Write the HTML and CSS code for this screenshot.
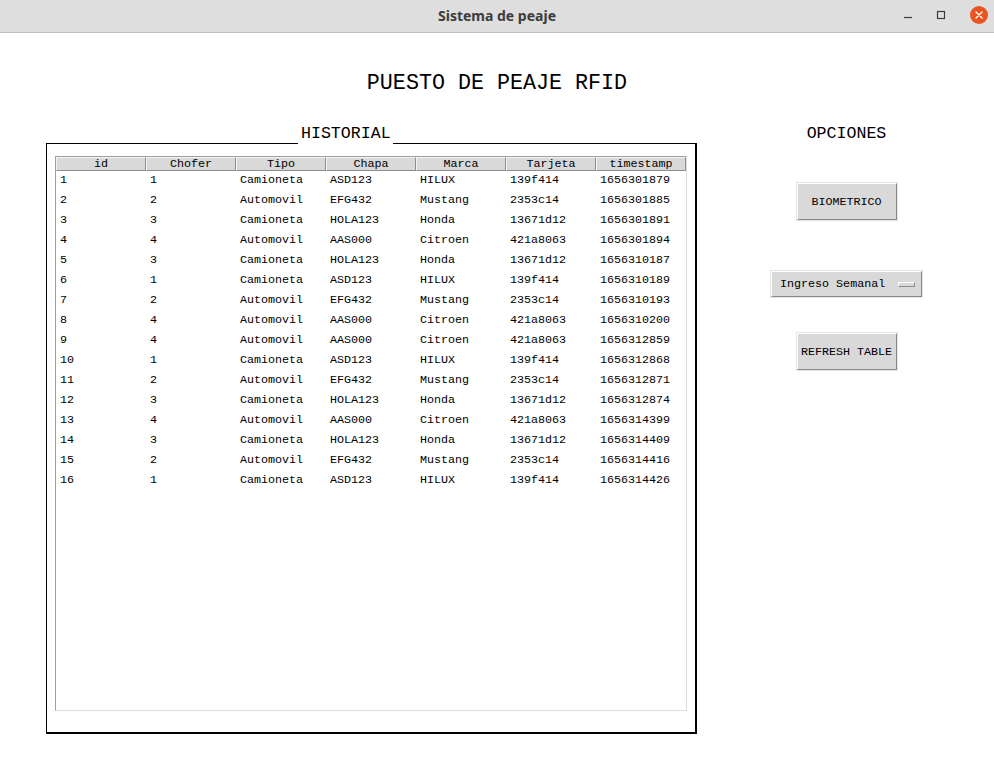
FILE: index.html
```html
<!DOCTYPE html>
<html lang="es">
<head>
<meta charset="utf-8">
<title>Sistema de peaje</title>
<link rel="stylesheet" href="styles.css">
</head>
<body>
<div class="window">
  <header class="titlebar">
    <div class="tb-spacer"></div>
    <div class="tb-title">Sistema de peaje</div>
    <div class="tb-controls">
      <span class="ctl ctl-min"><svg width="10" height="10" viewBox="0 0 10 10"><path d="M1 7.5h8" stroke="#3c3c3c" stroke-width="1.2"/></svg></span>
      <span class="ctl ctl-max"><svg width="10" height="10" viewBox="0 0 10 10"><rect x="1.5" y="1.5" width="7" height="7" fill="none" stroke="#3c3c3c" stroke-width="1.2"/></svg></span>
      <span class="ctl ctl-close"><svg width="18" height="18" viewBox="0 0 18 18"><circle cx="9" cy="9" r="9" fill="#e95420"/><path d="M6 6l6 6M12 6l-6 6" stroke="#fff" stroke-width="1.4" stroke-linecap="round"/></svg></span>
    </div>
  </header>

  <main class="content">
    <h1 class="app-title">PUESTO DE PEAJE RFID</h1>

    <div class="main-row">
      <section class="historial">
        <div class="legend-row">
          <span class="legend-line legend-line-left"></span>
          <span class="legend-label">HISTORIAL</span>
          <span class="legend-line legend-line-right"></span>
        </div>
        <div class="frame">
          <div class="tree">
            <div class="tree-head">
              <div class="th">id</div>
              <div class="th">Chofer</div>
              <div class="th">Tipo</div>
              <div class="th">Chapa</div>
              <div class="th">Marca</div>
              <div class="th">Tarjeta</div>
              <div class="th">timestamp</div>
            </div>
            <div class="tree-body">
              <div class="tr"><span>1</span><span>1</span><span>Camioneta</span><span>ASD123</span><span>HILUX</span><span>139f414</span><span>1656301879</span></div>
              <div class="tr"><span>2</span><span>2</span><span>Automovil</span><span>EFG432</span><span>Mustang</span><span>2353c14</span><span>1656301885</span></div>
              <div class="tr"><span>3</span><span>3</span><span>Camioneta</span><span>HOLA123</span><span>Honda</span><span>13671d12</span><span>1656301891</span></div>
              <div class="tr"><span>4</span><span>4</span><span>Automovil</span><span>AAS000</span><span>Citroen</span><span>421a8063</span><span>1656301894</span></div>
              <div class="tr"><span>5</span><span>3</span><span>Camioneta</span><span>HOLA123</span><span>Honda</span><span>13671d12</span><span>1656310187</span></div>
              <div class="tr"><span>6</span><span>1</span><span>Camioneta</span><span>ASD123</span><span>HILUX</span><span>139f414</span><span>1656310189</span></div>
              <div class="tr"><span>7</span><span>2</span><span>Automovil</span><span>EFG432</span><span>Mustang</span><span>2353c14</span><span>1656310193</span></div>
              <div class="tr"><span>8</span><span>4</span><span>Automovil</span><span>AAS000</span><span>Citroen</span><span>421a8063</span><span>1656310200</span></div>
              <div class="tr"><span>9</span><span>4</span><span>Automovil</span><span>AAS000</span><span>Citroen</span><span>421a8063</span><span>1656312859</span></div>
              <div class="tr"><span>10</span><span>1</span><span>Camioneta</span><span>ASD123</span><span>HILUX</span><span>139f414</span><span>1656312868</span></div>
              <div class="tr"><span>11</span><span>2</span><span>Automovil</span><span>EFG432</span><span>Mustang</span><span>2353c14</span><span>1656312871</span></div>
              <div class="tr"><span>12</span><span>3</span><span>Camioneta</span><span>HOLA123</span><span>Honda</span><span>13671d12</span><span>1656312874</span></div>
              <div class="tr"><span>13</span><span>4</span><span>Automovil</span><span>AAS000</span><span>Citroen</span><span>421a8063</span><span>1656314399</span></div>
              <div class="tr"><span>14</span><span>3</span><span>Camioneta</span><span>HOLA123</span><span>Honda</span><span>13671d12</span><span>1656314409</span></div>
              <div class="tr"><span>15</span><span>2</span><span>Automovil</span><span>EFG432</span><span>Mustang</span><span>2353c14</span><span>1656314416</span></div>
              <div class="tr"><span>16</span><span>1</span><span>Camioneta</span><span>ASD123</span><span>HILUX</span><span>139f414</span><span>1656314426</span></div>
            </div>
          </div>
        </div>
      </section>

      <aside class="opciones">
        <div class="opciones-title">OPCIONES</div>
        <button class="tk-btn btn-bio" type="button">BIOMETRICO</button>
        <div class="optmenu">
          <span class="optmenu-text">Ingreso Semanal</span>
          <span class="optmenu-ind"></span>
        </div>
        <button class="tk-btn btn-refresh" type="button">REFRESH TABLE</button>
      </aside>
    </div>
  </main>
</div>
</body>
</html>
```

FILE: styles.css
```css
* { box-sizing: border-box; }

html, body {
  margin: 0;
  padding: 0;
  background: #ffffff;
}

.window {
  width: 994px;
  height: 782px;
  display: flex;
  flex-direction: column;
  background: #ffffff;
  overflow: hidden;
}

/* ---------- title bar ---------- */
.titlebar {
  height: 33px;
  flex: 0 0 33px;
  background: #dedede;
  border-bottom: 1px solid #bdbdbd;
  display: grid;
  grid-template-columns: 1fr auto 1fr;
  align-items: center;
}

.tb-title {
  font-family: "Noto Sans", "DejaVu Sans", sans-serif;
  font-weight: 700;
  font-size: 14px;
  color: #3c3c3c;
  letter-spacing: 0;
  padding-bottom: 2px;
}

.tb-controls {
  display: flex;
  justify-content: flex-end;
  align-items: center;
  padding-right: 6px;
  padding-bottom: 3px;
}

.ctl {
  display: flex;
  align-items: center;
  justify-content: center;
}

.ctl-min { width: 10px; height: 10px; margin-right: 23px; }
.ctl-max { width: 10px; height: 10px; margin-right: 24px; }
.ctl-close { width: 18px; height: 18px; }

/* ---------- content ---------- */
.content {
  flex: 1;
  font-family: "Liberation Mono", "DejaVu Sans Mono", monospace;
  color: #000;
}

.app-title {
  margin: 38px 0 0 0;
  text-align: center;
  font-family: "Liberation Mono", "DejaVu Sans Mono", monospace;
  font-weight: 400;
  font-size: 21.7px;
  line-height: 26px;
  height: 26px;
}

.main-row {
  display: flex;
  align-items: flex-start;
  margin-top: 28px;
}

/* ---------- historial frame ---------- */
.historial {
  margin-left: 46px;
  width: 651px;
}

.legend-row {
  display: flex;
  align-items: stretch;
  height: 19px;
}

.legend-line {
  border-bottom: 1px solid #000;
}

.legend-line-left { width: 252px; }
.legend-line-right { flex: 1; }

.legend-label {
  font-size: 16.6px;
  line-height: 18px;
  padding: 0 2px 1px 3px;
}

.frame {
  border-left: 1px solid #000;
  border-right: 2px solid #000;
  border-bottom: 2px solid #000;
  padding: 12px 8px 21px 8px;
}

.tree {
  height: 555px;
  border-top: 1px solid #a0a0a0;
  border-left: 1px solid #a0a0a0;
  border-right: 1px solid #dcdcdc;
  border-bottom: 1px solid #dcdcdc;
  background: #fff;
}

.tree-head {
  display: grid;
  grid-template-columns: repeat(7, 90px);
  height: 13px;
}

.th {
  background: #d9d9d9;
  border-top: 1px solid #f4f4f4;
  border-left: 1px solid #f4f4f4;
  border-right: 1px solid #8e8e8e;
  border-bottom: 1px solid #8e8e8e;
  font-size: 11.7px;
  line-height: 12px;
  text-align: center;
  color: #000;
}

.tr {
  display: grid;
  grid-template-columns: repeat(7, 90px);
  height: 20px;
  font-size: 11.7px;
  line-height: 20px;
}

.tr span {
  padding-left: 4px;
  white-space: nowrap;
}

/* ---------- opciones ---------- */
.opciones {
  margin-left: 74px;
  width: 151px;
  display: flex;
  flex-direction: column;
  align-items: center;
}

.opciones-title {
  font-size: 16.6px;
  line-height: 18px;
  height: 19px;
}

.tk-btn {
  width: 100px;
  height: 37px;
  padding: 0;
  font-family: "Liberation Mono", "DejaVu Sans Mono", monospace;
  font-size: 11.7px;
  font-weight: 400;
  color: #000;
  background: #d9d9d9;
  border-top: 1px solid #ffffff;
  border-left: 1px solid #ffffff;
  border-right: 1px solid #8a8a8a;
  border-bottom: 1px solid #8a8a8a;
  outline: 1px solid #e4e4e4;
  cursor: default;
}

.btn-bio { margin-top: 39px; }
.btn-refresh { margin-top: 36px; }

.optmenu {
  margin-top: 51px;
  width: 151px;
  height: 26px;
  background: #d9d9d9;
  border-top: 1px solid #ffffff;
  border-left: 1px solid #ffffff;
  border-right: 1px solid #8a8a8a;
  border-bottom: 1px solid #8a8a8a;
  outline: 1px solid #e4e4e4;
  display: flex;
  align-items: center;
  justify-content: space-between;
  padding: 0 6px 0 8px;
}

.optmenu-text {
  font-size: 11.7px;
  line-height: 24px;
}

.optmenu-ind {
  width: 17px;
  height: 5px;
  background: #d9d9d9;
  border-top: 1px solid #ffffff;
  border-left: 1px solid #ffffff;
  border-right: 1px solid #8a8a8a;
  border-bottom: 1px solid #8a8a8a;
}
```
